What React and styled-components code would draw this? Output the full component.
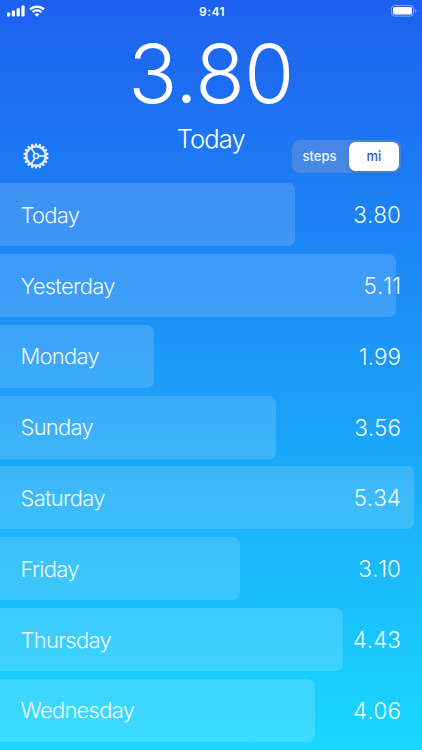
import React from "react";
import styled, { createGlobalStyle } from "styled-components";

const PX_PER_MILE = 77.5;
const TEETH = 18;

const DAYS = [
  { name: "Today", miles: "3.80" },
  { name: "Yesterday", miles: "5.11" },
  { name: "Monday", miles: "1.99" },
  { name: "Sunday", miles: "3.56" },
  { name: "Saturday", miles: "5.34" },
  { name: "Friday", miles: "3.10" },
  { name: "Thursday", miles: "4.43" },
  { name: "Wednesday", miles: "4.06" },
];

const SignalIcon = () => (
  <svg width="18" height="12" viewBox="0 0 18 12" fill="#fff">
    <rect x="0" y="7.6" width="3.2" height="3.9" rx="0.9" />
    <rect x="4.8" y="5.6" width="3.2" height="5.9" rx="0.9" />
    <rect x="9.6" y="3.2" width="3.2" height="8.3" rx="0.9" />
    <rect x="14.4" y="0.5" width="3.2" height="11" rx="0.9" />
  </svg>
);

const WifiIcon = () => (
  <svg width="16" height="12" viewBox="0 0 16 12" fill="none" stroke="#fff" strokeWidth="2.3">
    <path d="M1.1 4.4a9.8 9.8 0 0 1 13.8 0" />
    <path d="M3.6 7.3a6.2 6.2 0 0 1 8.8 0" />
    <path d="M8 11.8 5.7 9.5a3.2 3.2 0 0 1 4.6 0Z" fill="#fff" stroke="none" />
  </svg>
);

const BatteryIcon = () => (
  <svg width="26" height="12" viewBox="0 0 26 12">
    <rect x="0.5" y="0.5" width="22" height="10.6" rx="3" fill="none" stroke="#fff" strokeOpacity="0.45" />
    <rect x="2" y="2" width="19" height="7.6" rx="1.6" fill="#fff" />
    <path d="M24 4v3.8a2 2 0 0 0 0-3.8Z" fill="#fff" fillOpacity="0.5" />
  </svg>
);

const GearIcon = () => (
  <svg width="26" height="26" viewBox="-13 -13 26 26" fill="none" stroke="#e2f0ff">
    {Array.from({ length: TEETH }, (_, i) => (
      <path
        key={i}
        d="M-1.5-9.8-1-12.6H1L1.5-9.8Z"
        fill="#e2f0ff"
        stroke="none"
        transform={`rotate(${(i * 360) / TEETH})`}
      />
    ))}
    <circle r="9.7" strokeWidth="2.2" />
    <circle r="2.5" strokeWidth="1.6" />
    {[0, 120, 240].map((angle) => (
      <path key={angle} d="M3 0H9" strokeWidth="1.7" transform={`rotate(${angle})`} />
    ))}
  </svg>
);

const App = () => (
  <Screen>
    <GlobalStyle />
    <StatusBar>
      <StatusGroup>
        <SignalIcon />
        <WifiIcon />
      </StatusGroup>
      <Clock>9:41</Clock>
      <StatusGroup $end>
        <BatteryIcon />
      </StatusGroup>
    </StatusBar>
    <Total>3.80</Total>
    <Controls>
      <SettingsButton aria-label="Settings">
        <GearIcon />
      </SettingsButton>
      <Period>Today</Period>
      <UnitSwitch>
        <Unit>steps</Unit>
        <Unit $active>mi</Unit>
      </UnitSwitch>
    </Controls>
    <DayList>
      {DAYS.map(({ name, miles }) => (
        <Day key={name}>
          <Bar style={{ width: Number(miles) * PX_PER_MILE }} />
          <DayName>{name}</DayName>
          <Miles>{miles}</Miles>
        </Day>
      ))}
    </DayList>
  </Screen>
);

const GlobalStyle = createGlobalStyle`
  * {
    box-sizing: border-box;
  }

  body {
    margin: 0;
    font-family: Inter, "Liberation Sans", sans-serif;
    color: #fff;
  }

  svg {
    display: block;
  }
`;

const Screen = styled.main`
  display: flex;
  flex-direction: column;
  height: 750px;
  overflow: hidden;
  background: linear-gradient(#1e60f0 0%, #1c92f7 43%, #19d8ff 100%);
`;

const StatusBar = styled.header`
  display: grid;
  grid-template-columns: 1fr auto 1fr;
  align-items: center;
  height: 21px;
  padding: 0 5px 0 7px;
`;

const StatusGroup = styled.div`
  display: flex;
  gap: 4px;
  justify-content: ${({ $end }) => ($end ? "flex-end" : "flex-start")};
`;

const Clock = styled.div`
  padding-top: 1px;
  font-size: 12px;
  font-weight: 600;
  letter-spacing: 0.4px;
`;

const Total = styled.h1`
  height: 105px;
  margin: 0;
  font-size: 81px;
  font-weight: 300;
  line-height: 107px;
  letter-spacing: -0.6px;
  text-align: center;
`;

const Controls = styled.section`
  display: grid;
  grid-template-columns: 1fr auto 1fr;
  align-items: start;
  height: 57.3px;
  padding: 0 21px 0 22.5px;
`;

const SettingsButton = styled.button`
  justify-self: start;
  margin: 16.5px 0 0;
  padding: 0;
  border: 0;
  background: none;
`;

const Period = styled.h2`
  margin: 0 2px 0 0;
  font-size: 25.5px;
  font-weight: 350;
  line-height: 26px;
  letter-spacing: -0.9px;
`;

const UnitSwitch = styled.div`
  display: flex;
  justify-self: end;
  width: 109px;
  height: 33px;
  margin-top: 13.5px;
  padding: 2px;
  border-radius: 8px;
  background: rgba(130, 157, 205, 0.42);
`;

const Unit = styled.div`
  flex: ${({ $active }) => ($active ? "0 0 50px" : "1")};
  padding-right: ${({ $active }) => ($active ? "0" : "4px")};
  border-radius: 6.5px;
  background: ${({ $active }) => ($active ? "#fff" : "none")};
  box-shadow: ${({ $active }) => ($active ? "0 2px 5px rgba(0, 0, 0, 0.13)" : "none")};
  color: ${({ $active }) => ($active ? "#2959cb" : "#f4f8ff")};
  font-size: 13px;
  font-weight: 500;
  line-height: 29px;
  text-align: center;
`;

const DayList = styled.section`
  display: flex;
  flex-direction: column;
  gap: 7.8px;
`;

const Day = styled.div`
  display: grid;
  grid-template-columns: 20.5px 1fr auto 21px;
  align-items: center;
  height: 63px;
  font-size: 22px;
  font-weight: 350;
  color: rgba(255, 255, 255, 0.95);
`;

const Bar = styled.div`
  grid-area: 1 / 1 / 2 / 5;
  height: 63px;
  border-radius: 0 7px 7px 0;
  background: rgba(255, 255, 255, 0.15);
`;

const DayName = styled.span`
  grid-area: 1 / 2;
  letter-spacing: -0.75px;
`;

const Miles = styled.span`
  grid-area: 1 / 3;
  font-size: 22.5px;
  font-kerning: none;
`;

export default App;
